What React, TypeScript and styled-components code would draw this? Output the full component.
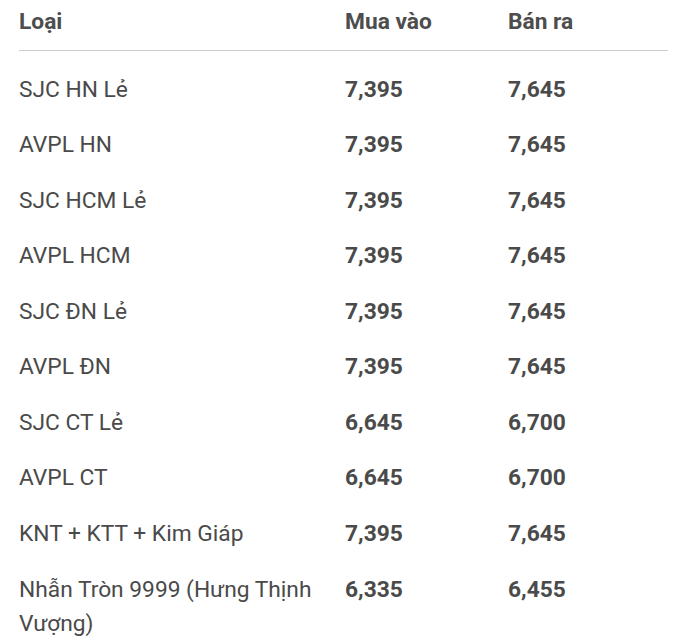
import React, { FC } from 'react';
import styled, { createGlobalStyle } from 'styled-components';

const GlobalStyle = createGlobalStyle`
  html, body {
    margin: 0;
    padding: 0;
    background: #ffffff;
  }
  body {
    font-family: Roboto, "Liberation Sans", Arial, sans-serif;
    color: #4a4a4a;
  }
`;

interface PriceRow {
  name: string;
  buy: string;
  sell: string;
}

const rows: PriceRow[] = [
  { name: `SJC HN Lẻ`, buy: `7,395`, sell: `7,645` },
  { name: `AVPL HN`, buy: `7,395`, sell: `7,645` },
  { name: `SJC HCM Lẻ`, buy: `7,395`, sell: `7,645` },
  { name: `AVPL HCM`, buy: `7,395`, sell: `7,645` },
  { name: `SJC ĐN Lẻ`, buy: `7,395`, sell: `7,645` },
  { name: `AVPL ĐN`, buy: `7,395`, sell: `7,645` },
  { name: `SJC CT Lẻ`, buy: `6,645`, sell: `6,700` },
  { name: `AVPL CT`, buy: `6,645`, sell: `6,700` },
  { name: `KNT + KTT + Kim Giáp`, buy: `7,395`, sell: `7,645` },
  { name: `Nhẫn Tròn 9999 (Hưng Thịnh Vượng)`, buy: `6,335`, sell: `6,455` },
];

const TableRoot = styled.div`
  width: 649px;
  margin-left: 19px;
  font-size: 22.75px;
  line-height: 34px;
`;

const Row = styled.div<{ $head?: boolean }>`
  display: grid;
  grid-template-columns: 326px 163px 1fr;
  align-items: start;
  padding: ${({ $head }) => ($head ? `5px 0 11px` : `10.78px 0`)};
  border-bottom: ${({ $head }) => ($head ? `1px solid #cfcfcf` : `none`)};
`;

const Body = styled.div`
  padding-top: 11px;
`;

const HeadCell = styled.div`
  font-weight: 700;
  color: #4d4d4d;
`;

const NameCell = styled.div`
  font-weight: 400;
  padding-right: 12px;
`;

const PriceCell = styled.div`
  font-weight: 700;
`;

const App: FC = () => (
  <>
    <GlobalStyle />
    <TableRoot>
      <Row $head>
        <HeadCell>Loại</HeadCell>
        <HeadCell>Mua vào</HeadCell>
        <HeadCell>Bán ra</HeadCell>
      </Row>
      <Body>
        {rows.map((row) => (
          <Row key={row.name}>
            <NameCell>{row.name}</NameCell>
            <PriceCell>{row.buy}</PriceCell>
            <PriceCell>{row.sell}</PriceCell>
          </Row>
        ))}
      </Body>
    </TableRoot>
  </>
);

export default App;
